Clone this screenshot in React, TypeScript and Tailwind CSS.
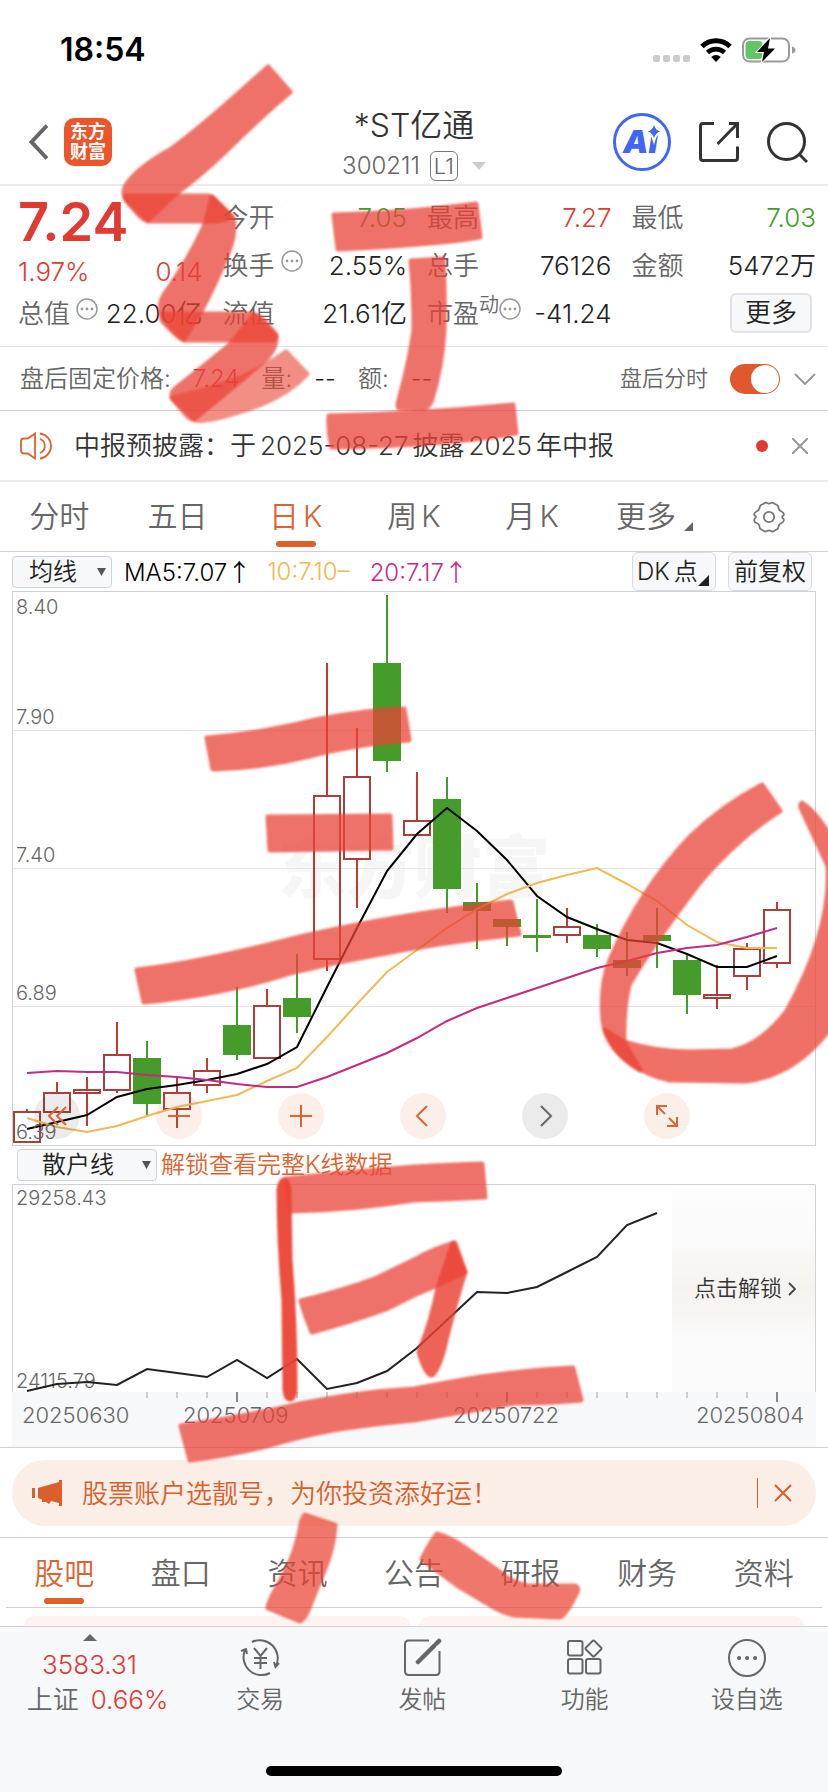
import React, { useState } from 'react';
import clsx from 'clsx';

interface Candle {
    up: boolean;
    high: number;
    top: number;
    bottom: number;
    low: number;
}

const FIRST_X = 27;
const STEP_X = 30;

const xAt = (index: number) => FIRST_X + index * STEP_X;
const toPoints = (values: number[]) => values.map((y, i) => `${xAt(i)},${y}`).join(' ');

const candle = (up: boolean, high: number, top: number, bottom: number, low: number): Candle => ({ up, high, top, bottom, low });

const candles: Candle[] = [
    candle(true, 1109, 1111, 1143, 1143),
    candle(true, 1082, 1092, 1113, 1113),
    candle(true, 1077, 1089, 1094, 1126),
    candle(true, 1022, 1054, 1091, 1093),
    candle(false, 1041, 1058, 1104, 1115),
    candle(true, 1077, 1092, 1110, 1128),
    candle(true, 1058, 1070, 1086, 1093),
    candle(false, 987, 1025, 1055, 1060),
    candle(true, 989, 1005, 1059, 1059),
    candle(false, 954, 998, 1017, 1033),
    candle(true, 663, 795, 960, 971),
    candle(true, 728, 776, 860, 908),
    candle(false, 595, 663, 761, 772),
    candle(true, 772, 820, 836, 836),
    candle(false, 777, 799, 889, 913),
    candle(false, 883, 902, 911, 949),
    candle(false, 919, 919, 927, 946),
    candle(false, 899, 935, 938, 952),
    candle(true, 908, 926, 936, 943),
    candle(false, 924, 935, 949, 957),
    candle(false, 932, 960, 968, 976),
    candle(false, 908, 935, 941, 968),
    candle(false, 955, 960, 995, 1014),
    candle(true, 965, 994, 999, 1009),
    candle(true, 943, 948, 977, 990),
    candle(true, 902, 909, 964, 968),
];

const ma5 = [1129, 1122, 1115, 1097, 1089, 1085, 1080, 1074, 1064, 1047, 987, 928, 871, 834, 808, 831, 860, 896, 917, 929, 940, 943, 954, 967, 967, 956];
const ma10 = [1118, 1127, 1132, 1126, 1116, 1107, 1101, 1095, 1081, 1068, 1037, 1004, 972, 950, 928, 909, 894, 883, 875, 868, 884, 901, 925, 942, 948, 948];
const ma20 = [1073, 1071, 1072, 1072, 1075, 1077, 1080, 1084, 1087, 1087, 1077, 1065, 1053, 1038, 1021, 1008, 998, 988, 978, 968, 961, 953, 948, 945, 937, 928];
const retail = [1391, 1384, 1382, 1385, 1369, 1373, 1377, 1360, 1378, 1359, 1389, 1383, 1371, 1348, 1320, 1292, 1293, 1287, 1272, 1257, 1225, 1213];

const priceLabels = [
    { text: '8.40', y: 614 },
    { text: '7.90', y: 724 },
    { text: '7.40', y: 862 },
    { text: '6.89', y: 1000 },
    { text: '6.39', y: 1139 },
];

const dateLabels = [
    { text: '20250630', x: 22 },
    { text: '20250709', x: 183 },
    { text: '20250722', x: 453 },
    { text: '20250804', x: 696 },
];

const periods = ['分时', '五日', '日K', '周K', '月K'];
const sections = ['股吧', '盘口', '资讯', '公告', '研报', '财务', '资料'];

// Traços do marcador vermelho por cima da tela
const markerStrokes = [
    { d: 'M268 67 C240 92 205 125 170 150 C150 161 134 172 125 187 Q123 193 125 198 L148 220 L174 195 Q200 176 225 152 Q260 117 290 92 Z', opacity: 0.74 },
    { d: 'M126 196 L208 196 Q213 197 217 202 L231 216 Q226 221 210 221 L148 221 Q144 220 140 216 L126 200 Z', opacity: 0.74 },
    { d: 'M212 197 L233 218 Q236 235 228 253 Q215 285 200 313 L184 339 Q175 333 162 315 Q158 305 164 295 Q192 255 206 222 Z', opacity: 0.74 },
    { d: 'M162 314 L252 314 Q258 315 264 321 L276 335 Q276 340 270 340 L184 340 Q178 338 162 320 Z', opacity: 0.74 },
    { d: 'M254 315 L276 336 Q277 347 267 358 Q240 382 194 419 L173 399 Q170 394 175 389 Q202 368 230 345 Z', opacity: 0.74 },
    { d: 'M172 398 Q200 392 240 378 Q265 367 286 352 L307 374 Q290 392 262 404 Q225 418 205 420 Q193 422 187 416 Z', opacity: 0.6 },
    { d: 'M334 215 Q410 213 476 204 L480 237 Q440 244 338 249 Z', opacity: 0.74 },
    { d: 'M411 261 L443 259 Q445 300 444 330 Q442 368 431 402 Q428 407 424 408 L399 408 Q397 406 399 400 Q410 360 414 330 Q414 290 411 261 Z', opacity: 0.74 },
    { d: 'M329 416 Q420 414 513 405 L516 433 Q450 445 332 447 Q328 432 329 416 Z', opacity: 0.74 },
    { d: 'M207 738 Q260 734 320 719 Q370 710 404 709 L409 740 Q350 745 310 756 Q260 768 213 769 Z', opacity: 0.74 },
    { d: 'M268 817 L390 816 L391 848 L270 850 Z', opacity: 0.74 },
    { d: 'M137 970 Q200 963 300 937 Q400 914 511 902 L519 934 Q440 942 370 956 Q330 963 290 973 Q220 995 144 1002 Z', opacity: 0.74 },
    { d: 'M762 785 L780 811 Q740 836 700 882 Q650 948 629 985 Q623 1010 624 1042 L640 1070 Q606 1050 603 1020 Q600 985 610 960 Q640 890 690 837 Q722 806 762 785 Z', opacity: 0.74 },
    { d: 'M802 803 Q818 814 832 840 L832 1026 Q795 1076 745 1081 L670 1080 Q622 1070 605 1030 L624 1042 Q655 1052 690 1052 L732 1051 Q762 1044 787 1011 Q832 930 828 866 Q814 836 803 812 Q799 805 802 803 Z', opacity: 0.76 },
    { d: 'M284 1180 Q288 1180 289 1190 L290 1260 Q295 1320 295 1390 Q294 1399 290 1399 Q286 1399 285 1390 L284 1300 Q279 1240 279 1190 Q280 1181 284 1180 Z', opacity: 0.94 },
    { d: 'M286 1179 Q350 1172 414 1167 Q450 1165 482 1164 L485 1197 Q450 1199 414 1200 Q350 1210 291 1211 Z', opacity: 0.74 },
    { d: 'M301 1301 Q345 1290 377 1278 L416 1259 Q436 1248 455 1243 L465 1272 Q445 1282 414 1295 L386 1309 Q350 1322 312 1332 Q306 1318 301 1301 Z', opacity: 0.74 },
    { d: 'M453 1243 L465 1272 Q456 1300 446 1340 Q440 1368 432 1375 Q426 1376 419 1352 Q432 1320 438 1288 Z', opacity: 0.82 },
    { d: 'M181 1426 Q250 1416 300 1404 Q360 1392 414 1389 Q450 1382 481 1377 Q530 1370 573 1368 L581 1400 Q550 1403 514 1403 Q460 1412 414 1420 Q370 1424 333 1430 Q300 1436 267 1446 Q225 1456 190 1460 Z', opacity: 0.74 },
    { d: 'M305 1515 L335 1525 Q334 1548 323 1573 L312 1600 Q306 1618 300 1621 L268 1608 Q268 1602 281 1580 Q296 1555 302 1520 Z', opacity: 0.72 },
    { d: 'M437 1534 Q450 1538 461 1545 L497 1570 Q510 1582 527 1586 L575 1586 Q579 1588 577 1592 Q566 1615 560 1617 L514 1615 Q500 1612 487 1603 L457 1585 L422 1559 Q430 1543 437 1534 Z', opacity: 0.72 },
];

const StatusBar: React.FC = () => (
    <div className="flex h-[100px] items-center justify-between pr-8 pl-15">
        <span className="text-[32px] font-semibold text-black">18:54</span>
        <div className="flex items-center gap-2.5">
            <div className="flex gap-[3px] pt-4">
                {[0, 1, 2, 3].map((dot) => (
                    <span key={dot} className="size-[7px] rounded-xs bg-[#cccccc]" />
                ))}
            </div>
            <svg className="h-6 w-8" viewBox="0 0 32 24">
                <path d="M2 8.5 A20 20 0 0 1 30 8.5" fill="none" stroke="#000" strokeWidth="5" />
                <path d="M7.5 14.5 A12.5 12.5 0 0 1 24.5 14.5" fill="none" stroke="#000" strokeWidth="4.6" />
                <path d="M16 24 L11.2 19 A7 7 0 0 1 20.8 19 Z" />
            </svg>
            <svg className="h-[26px] w-[54px]" viewBox="0 0 54 26">
                <rect x="1" y="1.5" width="46" height="23" rx="6.5" fill="none" stroke="#9a9a9a" strokeWidth="2" />
                <rect x="3.5" y="4" width="17" height="18" rx="4" fill="#64c466" />
                <path d="M50 9.5 Q53.500 10.500 53.500 13 Q53.500 15.500 50 16.500 Z" fill="#9a9a9a" />
                <path d="M28 1 L15 15 H22 L20 25 L33 11.500 H26 Z" fill="#000" stroke="#fff" strokeWidth="2" paintOrder="stroke" />
            </svg>
        </div>
    </div>
);

const Header: React.FC = () => (
    <header className="grid h-[86px] grid-cols-[1fr_auto_1fr] items-center border-b-2 border-[#ebebeb] px-5 pb-2">
        <div className="flex items-center gap-4 pl-2">
            <button aria-label="返回">
                <svg className="h-9 w-5" viewBox="0 0 20 36" fill="none" stroke="#666" strokeWidth="4">
                    <path d="M19 1.500 L3.500 18 L19 34.500" />
                </svg>
            </button>
            <a href="#home" className="flex size-12 flex-col items-center justify-center rounded-[10px] bg-[#eb5529] text-lg leading-5 font-bold text-white">
                <span>东方</span>
                <span>财富</span>
            </a>
        </div>
        <div className="flex flex-col items-center pt-1">
            <h1 className="text-[32px] leading-11 text-[#333]">*ST亿通</h1>
            <button className="flex items-center gap-2.5 text-2xl leading-9 text-[#666]">
                <span>300211</span>
                <span className="flex h-[30px] w-7 items-center justify-center rounded-md border border-[#777] text-[22px]">L1</span>
                <svg className="ml-1 h-2 w-3.5" viewBox="0 0 14 8">
                    <path d="M0 0 H14 L7 8 Z" fill="#ccc" />
                </svg>
            </button>
        </div>
        <div className="flex items-center justify-end gap-7">
            <button aria-label="Ai">
                <svg className="size-[58px]" viewBox="0 0 58 58">
                    <circle cx="29" cy="29" r="27.500" fill="none" stroke="#4166f5" strokeWidth="3" />
                    <text x="10" y="40" fontSize="32" fontWeight="900" fontStyle="italic" fill="#4166f5">Ai</text>
                    <path d="M41 12 Q42.500 17 47 18.500 Q42.500 20 41 25 Q39.500 20 35 18.500 Q39.500 17 41 12 Z" fill="#4166f5" stroke="#fff" strokeWidth="4" paintOrder="stroke" />
                </svg>
            </button>
            <button aria-label="分享">
                <svg className="size-10" viewBox="0 0 40 40" fill="none" stroke="#333" strokeWidth="3">
                    <path d="M15 1.500 H4 Q1.500 1.500 1.500 4 V36 Q1.500 38.500 4 38.500 H36 Q38.500 38.500 38.500 36 V24.500" />
                    <path d="M30 1.500 H38.500 V16 M38 2 L18.500 22" />
                </svg>
            </button>
            <button aria-label="搜索">
                <svg className="size-[41px]" viewBox="0 0 41 41" fill="none" stroke="#333" strokeWidth="3">
                    <circle cx="19.500" cy="19.500" r="18" />
                    <path d="M32 32 L40 40" />
                </svg>
            </button>
        </div>
    </header>
);

const InfoIcon: React.FC = () => (
    <svg className="mb-2 size-[22px] shrink-0" viewBox="0 0 22 22">
        <circle cx="11" cy="11" r="10" fill="none" stroke="#999" strokeWidth="1.500" />
        <circle cx="6" cy="11" r="1.400" fill="#999" />
        <circle cx="11" cy="11" r="1.400" fill="#999" />
        <circle cx="16" cy="11" r="1.400" fill="#999" />
    </svg>
);

interface QuoteItemProps {
    label: string;
    value: string;
    color?: string;
    sup?: string;
    info?: boolean;
}

const QuoteItem: React.FC<QuoteItemProps> = ({ label, value, color = 'text-[#222]', sup, info }) => (
    <div className="flex h-12 items-center justify-between text-[26px] whitespace-nowrap">
        <span className="flex items-center text-[#666]">
            {label}
            {sup && <span className="mb-4 text-xl leading-5">{sup}</span>}
            {info && <span className={sup ? '' : 'ml-1.5'}><InfoIcon /></span>}
        </span>
        <span className={color}>{value}</span>
    </div>
);

const Quote: React.FC = () => (
    <section className="grid grid-cols-4 gap-x-5 border-b border-[#e4e4e8] pt-[7px] pr-3 pb-[9px] pl-[18px]">
        <div>
            <div className="flex h-14 items-center text-[54px] font-semibold text-[#df3b32]">7.24</div>
            <div className="flex h-11 items-center justify-between text-[26px] text-[#df3b32]">
                <span>1.97%</span>
                <span>0.14</span>
            </div>
            <div className="-mt-1">
                <QuoteItem label="总值" value="22.00亿" info />
            </div>
        </div>
        <div>
            <QuoteItem label="今开" value="7.05" color="text-[#439c2a]" />
            <QuoteItem label="换手" value="2.55%" info />
            <QuoteItem label="流值" value="21.61亿" />
        </div>
        <div>
            <QuoteItem label="最高" value="7.27" color="text-[#df3b32]" />
            <QuoteItem label="总手" value="76126" />
            <QuoteItem label="市盈" value="-41.24" sup="动" info />
        </div>
        <div>
            <QuoteItem label="最低" value="7.03" color="text-[#439c2a]" />
            <QuoteItem label="金额" value="5472万" />
            <div className="flex h-12 items-center justify-end pr-1">
                <button className="h-10 w-[82px] rounded-md border-2 border-[#e1e2e8] bg-[#f7f8fa] text-[26px] leading-8 text-[#222]">更多</button>
            </div>
        </div>
    </section>
);

const AfterHours: React.FC = () => {
    const [enabled, setEnabled] = useState(true);

    return (
        <section className="flex h-16 items-center justify-between border-b border-[#d0d1d6] pr-3 pl-5 text-2xl text-[#666]">
            <div className="flex items-center gap-[22px]">
                <span>盘后固定价格:</span>
                <span className="text-[#df3b32]">7.24</span>
                <span>量:</span>
                <span className="text-[#222]">--</span>
                <span>额:</span>
                <span className="text-[#222]">--</span>
            </div>
            <label className="flex items-center gap-[22px] text-[22px]">
                盘后分时
                <input
                    type="checkbox"
                    checked={enabled}
                    onChange={(e) => setEnabled(e.target.checked)}
                    className="flex h-[30px] w-[50px] appearance-none items-center rounded-full bg-[#ccc] p-px before:size-7 before:rounded-full before:bg-white checked:justify-end checked:bg-[#e0592d]"
                />
                <svg className="-ml-2 h-3 w-[22px]" viewBox="0 0 22 12" fill="none" stroke="#999" strokeWidth="2">
                    <path d="M1 1 L11 11 L21 1" />
                </svg>
            </label>
        </section>
    );
};

const Notice: React.FC = () => (
    <section className="flex h-[71px] items-center border-b-2 border-[#ebebeb] pr-4 pl-5">
        <svg className="h-7 w-[34px]" viewBox="0 0 34 28" fill="none" stroke="#dd6430" strokeWidth="1.800">
            <path d="M15 1.500 V26.500 L8 21.500 H4 Q1 21.500 1 18.500 V9 Q1 6.500 4 6.500 H8 Z" />
            <path d="M20 7 A7.500 7.500 0 0 1 20 21 M20 1.500 A12.600 12.600 0 0 1 20 26.500" />
        </svg>
        <p className="ml-5 flex-1 text-[26px] text-[#333]">
            中报预披露：于<span className="px-1">2025-08-27</span>披露<span className="px-1">2025</span>年中报
        </p>
        <span className="size-3 rounded-full bg-[#df3b32]" />
        <button aria-label="关闭" className="ml-5 p-1">
            <svg className="size-4" viewBox="0 0 16 16" stroke="#999" strokeWidth="2">
                <path d="M0 0 L16 16 M16 0 L0 16" />
            </svg>
        </button>
    </section>
);

const PeriodTabs: React.FC = () => {
    const [active, setActive] = useState('日K');

    return (
        <nav className="grid h-[70px] grid-cols-7 border-b border-[#d0d1d6] text-[30px] text-[#666]">
            {periods.map((period) => (
                <button
                    key={period}
                    onClick={() => setActive(period)}
                    className={clsx('flex flex-col items-center justify-end pb-1', active === period && 'text-[#dd6430]')}
                >
                    <span className="leading-[50px]">
                        {period.endsWith('K') ? <>{period[0]}<span className="ml-1">K</span></> : period}
                    </span>
                    <span className={clsx('h-1.5 w-10 rounded-full', active === period && 'bg-[#dd5f2a]')} />
                </button>
            ))}
            <button className="flex items-center justify-center gap-2 pl-2">
                更多
                <svg className="mt-5 size-[9px]" viewBox="0 0 9 9">
                    <path d="M9 0 V9 H0 Z" fill="#666" />
                </svg>
            </button>
            <button aria-label="设置" className="flex items-center justify-center">
                <svg className="size-8" viewBox="0 0 32 32" fill="none" stroke="#777" strokeWidth="1.800" strokeLinejoin="round">
                    <path d="M11 2.500 Q12.500 1 14 2 Q16 3.200 18 2 Q19.500 1 21 2.500 L24 4 Q25.500 5 25.500 7 Q26 9.500 28.500 10.500 Q30.500 11.500 30.800 13 Q31 14.500 29.800 15 Q28.500 16 29.800 17.200 Q31 18 30.800 19.500 Q30 21.500 28.500 22 Q25.800 23 25.500 25.500 Q25.500 27.500 24 28.300 L21 30 Q19.500 31 18 30 Q16 28.800 14 30 Q12.500 31 11 30 L8 28.300 Q6.500 27.500 6.500 25.500 Q6.200 23 3.500 22 Q1.500 21.500 1.200 19.500 Q1 18 2.200 17.200 Q3.500 16 2.200 15 Q1 14.500 1.200 13 Q1.500 11.500 3.500 10.500 Q6 9.500 6.500 7 Q6.500 5 8 4 Z" />
                    <circle cx="16" cy="16" r="5.200" />
                </svg>
            </button>
        </nav>
    );
};

interface IndicatorSelectProps {
    id: string;
    label: string;
    options: string[];
    className: string;
}

const IndicatorSelect: React.FC<IndicatorSelectProps> = ({ id, label, options, className }) => (
    <div className="relative flex items-center">
        <select
            id={id}
            aria-label={label}
            className={clsx('h-8 appearance-none rounded-sm border border-[#d0d1d6] bg-[#f7f8fa] text-2xl leading-7 text-[#222]', className)}
        >
            {options.map((option) => (
                <option key={option}>{option}</option>
            ))}
        </select>
        <svg className="pointer-events-none absolute right-1.5 h-2 w-[9px]" viewBox="0 0 9 8">
            <path d="M0 0 H9 L4.500 8 Z" fill="#555" />
        </svg>
    </div>
);

const UpArrow: React.FC = () => <span className="font-['Noto_Sans_CJK_SC',sans-serif]">↑</span>;

const IndicatorBar: React.FC = () => (
    <div className="flex h-[39px] items-center justify-between pr-4 pl-3 text-2xl">
        <div className="flex items-center">
            <IndicatorSelect id="overlay" label="主图指标" options={['均线', 'BOLL']} className="w-[100px] pl-4" />
            <span className="ml-3 text-black">MA5:7.07<UpArrow /></span>
            <span className="ml-4 text-[#efb951]">10:7.10–</span>
            <span className="ml-5 text-[#c92a85]">20:7.17<UpArrow /></span>
        </div>
        <div className="flex gap-3">
            <button className="relative flex h-[39px] w-[84px] items-center gap-1 rounded-md border border-[#d9dae0] bg-[#f7f8fa] pl-1 text-[#222]">
                DK<span>点</span>
                <svg className="absolute right-1.5 bottom-1 size-[11px]" viewBox="0 0 11 11">
                    <path d="M11 0 V11 H0 Z" fill="#222" />
                </svg>
            </button>
            <button className="h-[39px] w-[84px] rounded-md border border-[#d9dae0] bg-[#f7f8fa] text-[#222]">前复权</button>
        </div>
    </div>
);

const chartButtons = [
    { label: '快退', path: 'M12 2 L3 11 L12 20 M20 2 L11 11 L20 20', tone: 'bg-black/8 text-[#dd6430]' },
    { label: '缩小', path: 'M0 11 H22', tone: 'bg-[#dd6430]/10 text-[#dd6430]' },
    { label: '放大', path: 'M0 11 H22 M11 0 V22', tone: 'bg-[#dd6430]/10 text-[#dd6430]' },
    { label: '左移', path: 'M15 1 L5 11 L15 21', tone: 'bg-[#dd6430]/10 text-[#dd6430]' },
    { label: '右移', path: 'M7 1 L17 11 L7 21', tone: 'bg-black/8 text-[#666]' },
    { label: '全屏', path: 'M1 10 V1 H11 M1 1 L9 9 M21 12 V21 H11 M21 21 L13 13', tone: 'bg-[#dd6430]/10 text-[#dd6430]' },
];

const CandleChart: React.FC = () => (
    <div className="relative mx-3">
        <svg className="block w-full" viewBox="12 591 804 555">
            <text x="278" y="893" fontSize="68" fontWeight="900" fill="#f6f6f6">东方财富</text>
            <path d="M12 730.500 H815 M12 868.500 H815 M12 1006.500 H815" stroke="#e4e4e9" />
            <rect x="12.500" y="591.500" width="803" height="554" fill="none" stroke="#d0d1d4" />
            {candles.map((c, i) => {
                const x = xAt(i);
                const color = c.up ? '#c23a33' : '#459c2b';
                return (
                    <g key={i}>
                        <path d={`M${x} ${c.high} V${c.top} M${x} ${c.bottom} V${c.low}`} stroke={color} strokeWidth="2" />
                        {c.up ? (
                            <rect x={x - 13} y={c.top + 1} width="26" height={c.bottom - c.top - 2} fill="none" stroke="#aa3f3b" strokeWidth="2" />
                        ) : (
                            <rect x={x - 14} y={c.top} width="28" height={c.bottom - c.top} fill={color} />
                        )}
                    </g>
                );
            })}
            <g fill="none" strokeWidth="2">
                <polyline points={toPoints(ma5)} stroke="#000" />
                <polyline points={toPoints(ma10)} stroke="#efbb56" />
                <polyline points={toPoints(ma20)} stroke="#c42b80" />
            </g>
            <g fontSize="20" fill="#666">
                {priceLabels.map((label) => (
                    <text key={label.text} x="16" y={label.y}>{label.text}</text>
                ))}
            </g>
        </svg>
        <div className="absolute bottom-[7px] left-[22px] flex gap-[76px]">
            {chartButtons.map((button) => (
                <button key={button.label} aria-label={button.label} className={clsx('flex size-[46px] items-center justify-center rounded-full', button.tone)}>
                    <svg className="size-[22px]" viewBox="0 0 22 22" fill="none" stroke="currentColor" strokeWidth="2">
                        <path d={button.path} />
                    </svg>
                </button>
            ))}
        </div>
    </div>
);

const RetailChart: React.FC = () => (
    <div>
        <div className="flex h-[38px] items-center gap-1 pl-[17px]">
            <IndicatorSelect id="sub" label="副图指标" options={['散户线', 'MACD']} className="w-[140px] pl-6" />
            <a href="#unlock" className="text-2xl text-[#dd6430]">解锁查看完整K线数据</a>
        </div>
        <div className="relative mx-3">
            <svg className="block w-full" viewBox="12 1184 804 263">
                <defs>
                    <linearGradient id="locked" x1="0" y1="0" x2="0" y2="1">
                        <stop offset="0.050" stopColor="#fdfdfd" />
                        <stop offset="0.250" stopColor="#fbfafa" />
                        <stop offset="0.500" stopColor="#f6f2ef" />
                        <stop offset="0.750" stopColor="#fafafa" />
                    </linearGradient>
                </defs>
                <rect x="12" y="1392" width="804" height="55" fill="#f7f8fa" />
                <rect x="672" y="1185" width="143" height="207" fill="url(#locked)" />
                <path d="M12.500 1392 V1184.500 H815.500 V1392" fill="none" stroke="#d0d1d6" />
                {candles.slice(4).map((_, i) => {
                    const major = [3, 12, 21].includes(i);
                    return (
                        <path key={i} d={`M${xAt(i + 4)} 1392 V${major ? 1402 : 1398}`} stroke={major ? '#888' : '#ccc'} strokeWidth="2" />
                    );
                })}
                <g fill="#666">
                    <text x="16" y="1205" fontSize="20">29258.43</text>
                    <text x="16" y="1388" fontSize="20">24115.79</text>
                    {dateLabels.map((label) => (
                        <text key={label.text} x={label.x} y="1423" fontSize="22">{label.text}</text>
                    ))}
                </g>
                <polyline points={toPoints(retail)} fill="none" stroke="#222" strokeWidth="2" />
            </svg>
            <button className="absolute top-22 right-5 flex items-center gap-1.5 text-[22px] text-[#333]">
                点击解锁
                <svg className="h-3.5 w-2" viewBox="0 0 8 14" fill="none" stroke="#444" strokeWidth="1.800">
                    <path d="M1 1 L7 7 L1 13" />
                </svg>
            </button>
        </div>
    </div>
);

const Promo: React.FC = () => (
    <section className="border-y border-[#d0d1d6] px-3 pt-3 pb-[11px]">
        <div className="flex h-[66px] items-center rounded-full bg-[#fbeee6] pr-6 pl-5 text-[26px] text-[#d9602b]">
            <svg className="h-[26px] w-[30px]" viewBox="0 0 30 26" fill="#d9602b">
                <rect y="8" width="3" height="10" />
                <path d="M6 8 L27 2 V0 H30 V26 H27 V23 L19 21 L17 24 L14 22 L10 22 V19.500 L6 18 Z" />
            </svg>
            <p className="ml-5 flex-1">股票账户选靓号，为你投资添好运！</p>
            <span className="h-[30px] w-px bg-[#d9602b]" />
            <button aria-label="关闭广告" className="ml-4">
                <svg className="size-[18px]" viewBox="0 0 18 18" stroke="#d9602b" strokeWidth="2">
                    <path d="M1 1 L17 17 M17 1 L1 17" />
                </svg>
            </button>
        </div>
    </section>
);

const SectionTabs: React.FC = () => {
    const [active, setActive] = useState('股吧');

    return (
        <nav className="mx-1.5 grid h-[70px] grid-cols-7 border-b border-[#d0d1d6] text-[30px] text-[#666]">
            {sections.map((section) => (
                <button
                    key={section}
                    onClick={() => setActive(section)}
                    className={clsx('flex flex-col items-center justify-end pb-[3px]', active === section && 'text-[#dd6430]')}
                >
                    <span className="leading-[50px]">{section}</span>
                    <span className={clsx('h-1.5 w-10 rounded-full', active === section && 'bg-[#dd5f2a]')} />
                </button>
            ))}
        </nav>
    );
};

const navItems = [
    {
        label: '交易',
        icon: (
            <>
                <path d="M12 4 A18 18 0 0 1 36 28 M39 25 L35.500 29 L34 24 M30 35 A18 18 0 0 1 5 12 M1 13 L6 11 L7 16" />
                <path d="M14 10 L20.500 18 L27 10 M14 20 H27 M14 25 H27 M20.500 18 V31" />
            </>
        ),
    },
    {
        label: '发帖',
        icon: (
            <>
                <path d="M27 2.500 H7 Q3 2.500 3 6.500 V33 Q3 37 7 37 H34 Q37.500 37 37.500 33 V13" />
                <path d="M16 24 L32 8 M34.500 5.500 L37 3" strokeWidth="4.500" strokeLinecap="round" />
            </>
        ),
    },
    {
        label: '功能',
        icon: (
            <>
                <rect x="3" y="3" width="14.500" height="14.500" rx="2" />
                <rect x="3" y="21" width="14.500" height="14.500" rx="2" />
                <rect x="21" y="21" width="14.500" height="14.500" rx="2" />
                <path d="M27.500 3 Q28.500 2 29.500 3 L36 9.500 Q37 10.500 36 11.500 L29.500 18 Q28.500 19 27.500 18 L21 11.500 Q20 10.500 21 9.500 Z" />
            </>
        ),
    },
    {
        label: '设自选',
        icon: (
            <>
                <circle cx="20" cy="20" r="18" />
                <path d="M12 20 h0.100 M20 20 h0.100 M28 20 h0.100" strokeWidth="4" strokeLinecap="round" />
            </>
        ),
    },
];

const BottomNav: React.FC = () => (
    <footer className="border-t border-[#d0d1d6] bg-[#f7f8fa] pb-4">
        <nav className="flex h-[139px] items-start text-2xl text-[#666]">
            <button className="flex w-[179px] flex-col items-center pt-[7px] text-[26px]">
                <svg className="h-[7px] w-3.5" viewBox="0 0 14 7">
                    <path d="M0 7 H14 L7 0 Z" fill="#666" />
                </svg>
                <span className="mt-1.5 leading-[35px] text-[#df3b32]">3583.31</span>
                <span className="flex gap-3 pl-4 leading-[35px]">
                    <span>上证</span>
                    <span className="text-[#df3b32]">0.66%</span>
                </span>
            </button>
            {navItems.map((item) => (
                <button key={item.label} className="flex flex-1 flex-col items-center gap-1 pt-[11px]">
                    <svg className="size-10" viewBox="0 0 40 40" fill="none" stroke="#666" strokeWidth="2">{item.icon}</svg>
                    <span className="leading-9">{item.label}</span>
                </button>
            ))}
        </nav>
        <div className="mx-auto h-2.5 w-[296px] rounded-full bg-black" />
    </footer>
);

const MarkerOverlay: React.FC = () => (
    <svg className="pointer-events-none absolute top-0 left-0 w-full" viewBox="0 0 828 1792" aria-hidden="true">
        <filter id="soft">
            <feGaussianBlur stdDeviation="1" />
        </filter>
        <g filter="url(#soft)" fill="#ea4335" stroke="#ea4335" strokeWidth="5" strokeLinejoin="round">
            {markerStrokes.map((stroke) => (
                <path key={stroke.d} d={stroke.d} opacity={stroke.opacity} />
            ))}
        </g>
    </svg>
);

const App: React.FC = () => (
    <div className="relative overflow-hidden bg-white font-['Inter','Noto_Sans_CJK_SC',sans-serif] font-[350]">
        <StatusBar />
        <Header />
        <main>
            <Quote />
            <AfterHours />
            <Notice />
            <PeriodTabs />
            <IndicatorBar />
            <CandleChart />
            <RetailChart />
            <Promo />
            <SectionTabs />
            <div className="grid grid-cols-2 gap-[9px] px-6 pt-2">
                <div className="h-2.5 rounded-t-3xl bg-[#fdf3f1]" />
                <div className="h-2.5 rounded-t-3xl bg-[#fdf3f1]" />
            </div>
        </main>
        <BottomNav />
        <MarkerOverlay />
    </div>
);

export default App;
